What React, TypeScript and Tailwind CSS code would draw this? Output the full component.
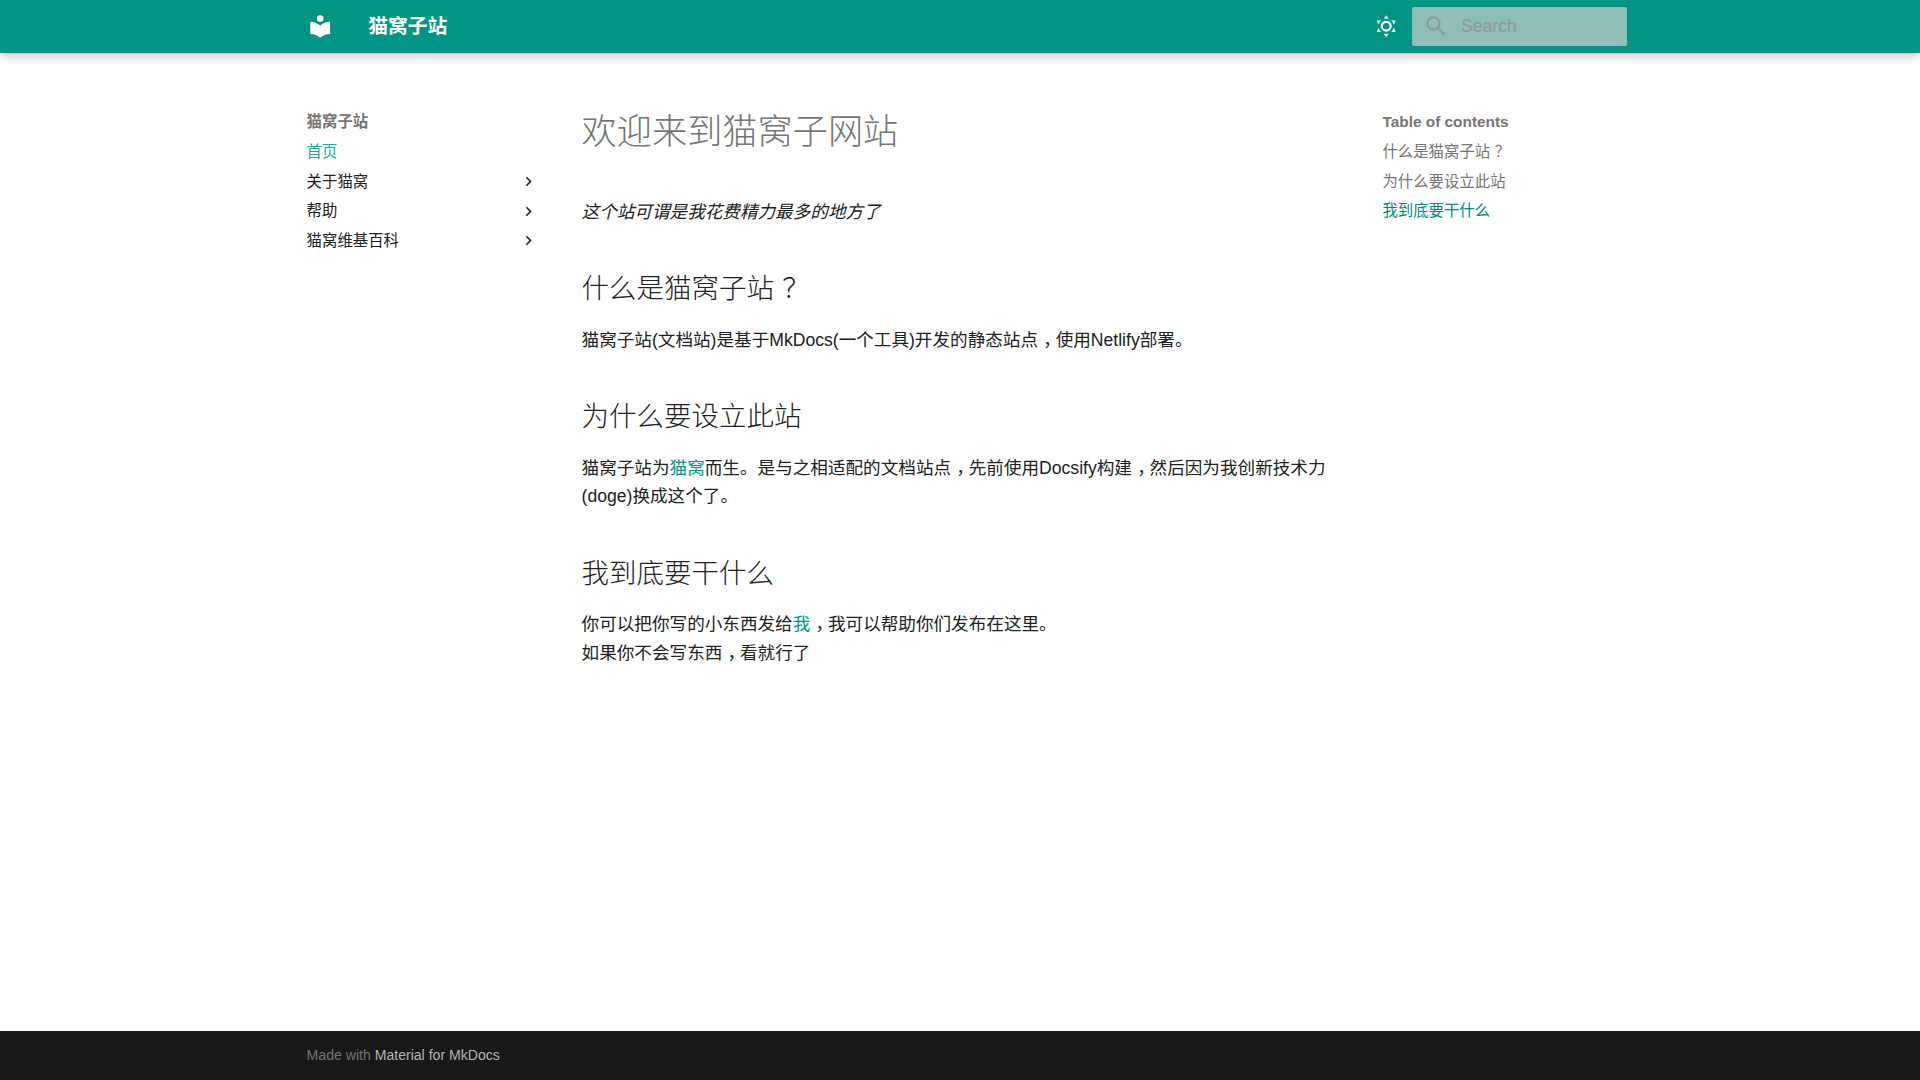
const navItems = ["关于猫窝", "帮助", "猫窝维基百科"];

const MdiIcon = ({ d, className }: { d: string; className: string }) => (
  <svg viewBox="0 0 24 24" fill="currentColor" className={className}>
    <path d={d} />
  </svg>
);

// full-width comma and question mark sit in the middle of their cell in the reference
const Punc = ({ children }: { children: string }) => (
  <span className="inline-block translate-x-[0.3em]">{children}</span>
);

const LIBRARY = "M12 8a3 3 0 0 0 3-3 3 3 0 0 0-3-3 3 3 0 0 0-3 3 3 3 0 0 0 3 3m0 3.54C9.64 9.35 6.5 8 3 8v11c3.5 0 6.64 1.35 9 3.54 2.36-2.19 5.5-3.54 9-3.54V8c-3.5 0-6.64 1.35-9 3.54Z";
const SUN = "M12 7a5 5 0 0 1 5 5 5 5 0 0 1-5 5 5 5 0 0 1-5-5 5 5 0 0 1 5-5m0 2a3 3 0 0 0-3 3 3 3 0 0 0 3 3 3 3 0 0 0 3-3 3 3 0 0 0-3-3m0-7 2.39 3.42C13.65 5.15 12.84 5 12 5c-.84 0-1.65.15-2.39.42L12 2M3.34 7l4.16-.35A7.2 7.2 0 0 0 5.94 8.5c-.44.74-.69 1.5-.83 2.29L3.34 7m.02 10 1.76-3.77a7.131 7.131 0 0 0 2.38 4.14L3.36 17M20.65 7l-1.77 3.79a7.023 7.023 0 0 0-2.38-4.15l4.15.36m-.01 10-4.14.36c.59-.51 1.12-1.14 1.54-1.86.42-.73.69-1.5.83-2.29L20.64 17M12 22l-2.41-3.44c.74.27 1.55.44 2.41.44.82 0 1.63-.17 2.37-.44L12 22Z";
const SEARCH = "M9.5 3A6.5 6.5 0 0 1 16 9.5c0 1.61-.59 3.09-1.56 4.23l.27.27h.79l5 5-1.5 1.5-5-5v-.79l-.27-.27A6.516 6.516 0 0 1 9.5 16 6.5 6.5 0 0 1 3 9.5 6.5 6.5 0 0 1 9.5 3m0 2C7 5 5 7 5 9.5S7 14 9.5 14 14 12 14 9.5 12 5 9.5 5Z";
const CHEVRON = "M8.59 16.58 13.17 12 8.59 7.41 10 6l6 6-6 6-1.41-1.42Z";

export default function App() {
  return (
    <div className="min-h-screen flex flex-col bg-white font-['Liberation_Sans','Noto_Sans_CJK_SC',sans-serif]">
      <header className="h-[53px] shrink-0 bg-[#009485] text-white shadow-[0_0_4px_rgba(0,0,0,0.1),0_4px_9px_rgba(0,0,0,0.2)]">
        <div className="w-[1342px] h-full mx-auto flex items-center pl-[17.8px] pr-[4.4px]">
          <MdiIcon d={LIBRARY} className="w-[26.4px] h-[26.4px]" />
          <span className="ml-[35px] text-[19.8px] font-bold">猫窝子站</span>
          <MdiIcon d={SUN} className="ml-auto w-[26.4px] h-[26.4px]" />
          <div className="ml-[11.8px] w-[215px] h-[39px] rounded-[2px] bg-[#8fbdb7] flex items-center pl-[11px] text-[#869c97]">
            <MdiIcon d={SEARCH} className="w-[26.4px] h-[26.4px]" />
            <span className="ml-[12px] text-[17.6px]">Search</span>
          </div>
        </div>
      </header>

      <main className="flex-1 w-[1342px] mx-auto flex">
        <aside className="w-[266.2px] shrink-0 pt-[59px] px-[17.6px] text-[15.4px] leading-[20px]">
          <div className="font-bold text-[#757575]">猫窝子站</div>
          <ul className="mt-[10px] flex flex-col gap-[9.6px] text-[#212121]">
            <li className="text-[#26a69a]">首页</li>
            {navItems.map((item) => (
              <li key={item} className="h-[20px] flex items-center justify-between">
                {item}
                <MdiIcon d={CHEVRON} className="w-[19px] h-[19px]" />
              </li>
            ))}
          </ul>
        </aside>

        <article className="flex-1 min-w-0 px-[26.4px] pt-[56px] text-[17.6px] leading-[28.16px] text-[#212121]">
          <h1 className="text-[35.2px] leading-[45.76px] font-light text-[#757575] mb-[43px]">欢迎来到猫窝子网站</h1>
          <p><em>这个站可谓是我花费精力最多的地方了</em></p>
          <h2 className="text-[27.5px] leading-[38.5px] font-light mt-[44px] mb-[17.6px]">什么是猫窝子站<Punc>？</Punc></h2>
          <p>猫窝子站(文档站)是基于MkDocs(一个工具)开发的静态站点<Punc>，</Punc>使用Netlify部署。</p>
          <h2 className="text-[27.5px] leading-[38.5px] font-light mt-[44px] mb-[17.6px]">为什么要设立此站</h2>
          <p>
            猫窝子站为<a className="text-[#009485]">猫窝</a>而生。是与之相适配的文档站点<Punc>，</Punc>先前使用Docsify构建<Punc>，</Punc>然后因为我创新技术力(doge)换成这个了。
          </p>
          <h2 className="text-[27.5px] leading-[38.5px] font-light mt-[44px] mb-[16.6px]">我到底要干什么</h2>
          <p className="h-[29.16px]">
            你可以把你写的小东西发给<a className="text-[#009485]">我</a><Punc>，</Punc>我可以帮助你们发布在这里。
          </p>
          <p>如果你不会写东西<Punc>，</Punc>看就行了</p>
        </article>

        <aside className="w-[266.2px] shrink-0 pt-[59px] px-[17.6px] text-[15.4px] leading-[20px]">
          <div className="font-bold text-[#757575]">Table of contents</div>
          <ul className="mt-[10px] flex flex-col gap-[9.6px] text-[#757575]">
            <li>什么是猫窝子站<Punc>？</Punc></li>
            <li>为什么要设立此站</li>
            <li className="text-[#00897b]">我到底要干什么</li>
          </ul>
        </aside>
      </main>

      <footer className="h-[49px] shrink-0 bg-[#181818] text-[14.08px]">
        <div className="w-[1342px] h-full mx-auto pl-[17.6px] flex items-center text-[#757575]">
          Made with&nbsp;<a className="text-[#b3b3b3]">Material for MkDocs</a>
        </div>
      </footer>
    </div>
  );
}
